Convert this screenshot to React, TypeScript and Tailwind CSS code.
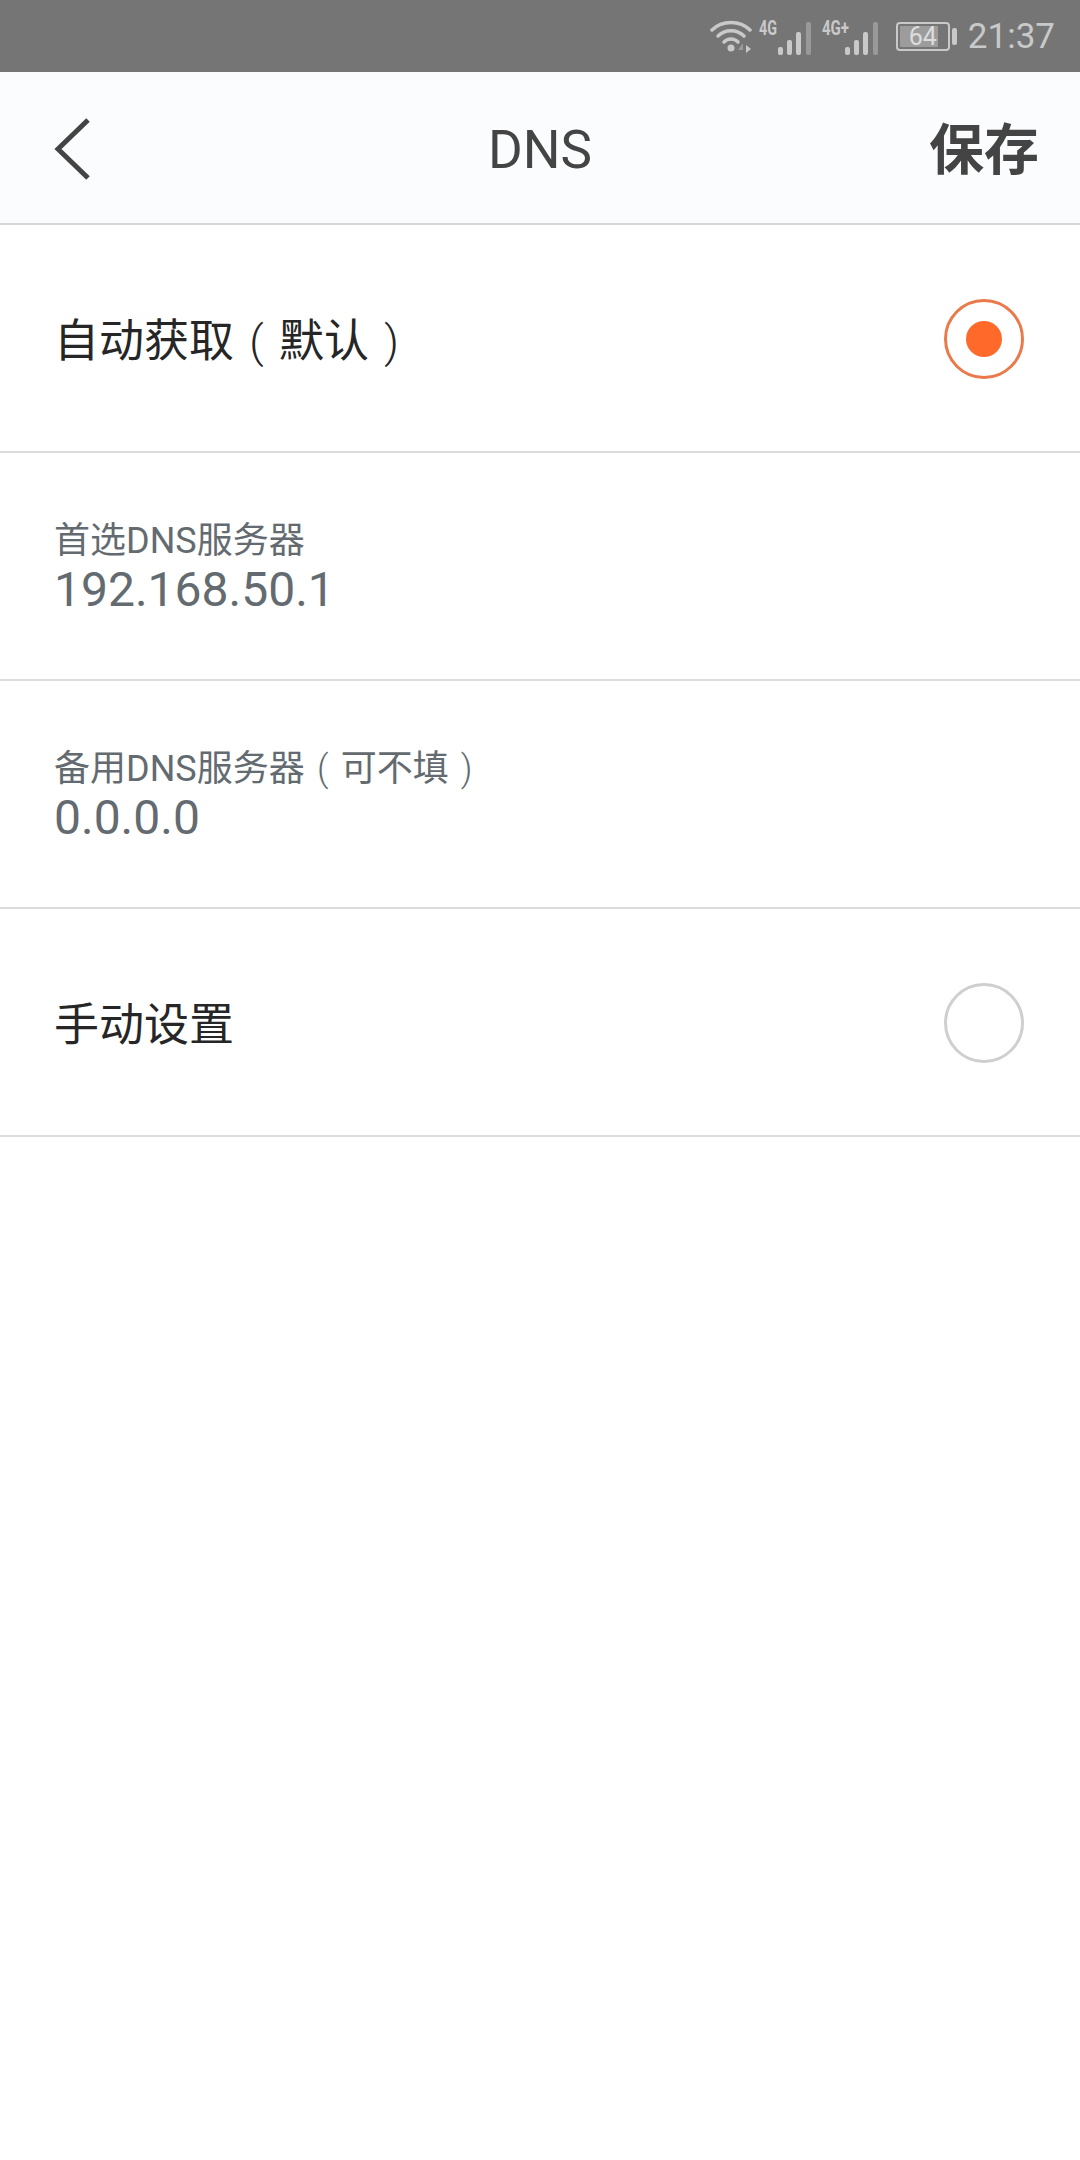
const FONT = "font-['Roboto','Noto_Sans_CJK_SC',sans-serif]";

function Wifi() {
  return (
    <svg width="42" height="34" viewBox="0 0 42 34" fill="none" className="text-[#c9c9c9]">
      <path d="M2 11 C12 1 30 1 40 11" stroke="currentColor" strokeWidth="3.5" strokeLinecap="round" />
      <path d="M8 17 C15 10 27 10 34 17" stroke="currentColor" strokeWidth="3.5" strokeLinecap="round" />
      <path d="M14 23 C18 19 24 19 28 23" stroke="currentColor" strokeWidth="3.5" strokeLinecap="round" />
      <circle cx="21" cy="29" r="3.5" fill="currentColor" />
      <path d="M32 25 L28 31 H33 V25 Z" fill="#9a9a9a" />
      <path d="M36 26 L41 30 L36 34 Z" fill="currentColor" />
    </svg>
  );
}

function Signal({ label }: { label: string }) {
  const wide = label.length > 2;
  return (
    <svg width={wide ? 60 : 55} height="40" viewBox={wide ? '0 -6 60 40' : '0 -6 55 40'} className="text-[#c9c9c9]">
      <text x="0" y="13" fontFamily="Roboto, sans-serif" fontWeight="700" fontSize="20" fill="currentColor" textLength={wide ? 27 : 18} lengthAdjust="spacingAndGlyphs">
        {label}
      </text>
      <g transform={wide ? 'translate(23 -2)' : 'translate(19 -2)'}>
        <rect x="0" y="27" width="5" height="8" rx="2" fill="currentColor" />
        <rect x="9" y="20" width="5" height="15" rx="2" fill="currentColor" />
        <rect x="18" y="12" width="5" height="23" rx="2" fill="currentColor" />
        <rect x="28" y="2" width="5" height="33" rx="2" fill="#999999" />
      </g>
    </svg>
  );
}

function Battery() {
  return (
    <div className="flex items-center gap-[2px]">
      <div className="relative w-[54px] h-[29px] rounded-[4px] border-2 border-[#c9c9c9] p-[2px]">
        <div className="h-full w-[38px] bg-[#9c9c9c] rounded-[1px]" />
        <span className={`absolute inset-0 flex items-center justify-center text-[25px] leading-none text-[#dcdcdc] ${FONT}`}>64</span>
      </div>
      <div className="w-[5px] h-[17px] rounded-[2px] bg-[#c9c9c9]" />
    </div>
  );
}

function Radio({ checked }: { checked?: boolean }) {
  if (checked) {
    return (
      <div className="mt-[2px] w-[80px] h-[80px] rounded-full border-[3px] border-[#ea7a4c] flex items-center justify-center shrink-0">
        <div className="w-[36px] h-[36px] rounded-full bg-[#ff6a2b]" />
      </div>
    );
  }
  return <div className="mt-[2px] w-[80px] h-[80px] rounded-full border-[3px] border-[#cfcfcf] shrink-0" />;
}

// brackets sit centred in a full CJK cell in the reference
function Paren({ children }: { children: string }) {
  return <span className="inline-block w-[1em] text-center font-light">{children}</span>;
}

function OptionRow({ label, note, checked }: { label: string; note?: string; checked?: boolean }) {
  return (
    <div className="h-[228px] border-b-2 border-[#dddddd] pl-[54px] pr-[56px] flex items-center justify-between">
      <span className="pt-[7px] text-[45px] leading-none text-[#262626]">
        {label}
        {note && (
          <>
            <Paren>(</Paren>
            {note}
            <Paren>)</Paren>
          </>
        )}
      </span>
      <Radio checked={checked} />
    </div>
  );
}

function ValueRow({ label, note, value }: { label: string; note?: string; value: string }) {
  return (
    <div className="h-[228px] border-b-2 border-[#dddddd] pl-[54px] pt-[6px] flex flex-col justify-center text-[#636b70]">
      <span className="text-[36px] leading-[42px]">
        {label}
        {note && (
          <>
            <Paren>(</Paren>
            {note}
            <Paren>)</Paren>
          </>
        )}
      </span>
      <span className="text-[48px] leading-[56px]">{value}</span>
    </div>
  );
}

export default function App() {
  return (
    <div className={`w-[1080px] h-[2160px] bg-white flex flex-col ${FONT}`}>
      {/* Status bar */}
      <div className="h-[72px] bg-[#757575] flex items-center justify-end pr-[25px]">
        <Wifi />
        <div className="ml-[7px]"><Signal label="4G" /></div>
        <div className="ml-[8px]"><Signal label="4G+" /></div>
        <div className="ml-[14px]"><Battery /></div>
        <span className="ml-[11px] text-[35px] leading-none text-[#c9c9c9]">21:37</span>
      </div>

      {/* Header */}
      <div className="h-[153px] bg-[#fbfcfe] border-b-2 border-[#d6d6d6] px-[41px] pt-[6px] grid grid-cols-[1fr_auto_1fr] items-center">
        <svg width="38" height="64" viewBox="0 0 38 64" fill="none" className="ml-[12px] -mt-[3px]">
          <path d="M35 3 L5 32 L35 61" stroke="#444444" strokeWidth="5" />
        </svg>
        <span className="text-[53px] leading-none text-[#444444]">DNS</span>
        <span className="justify-self-end text-[55px] leading-none font-bold text-[#444444]">保存</span>
      </div>

      <OptionRow label="自动获取" note="默认" checked />
      <ValueRow label="首选DNS服务器" value="192.168.50.1" />
      <ValueRow label="备用DNS服务器" note="可不填" value="0.0.0.0" />
      <OptionRow label="手动设置" />
    </div>
  );
}
